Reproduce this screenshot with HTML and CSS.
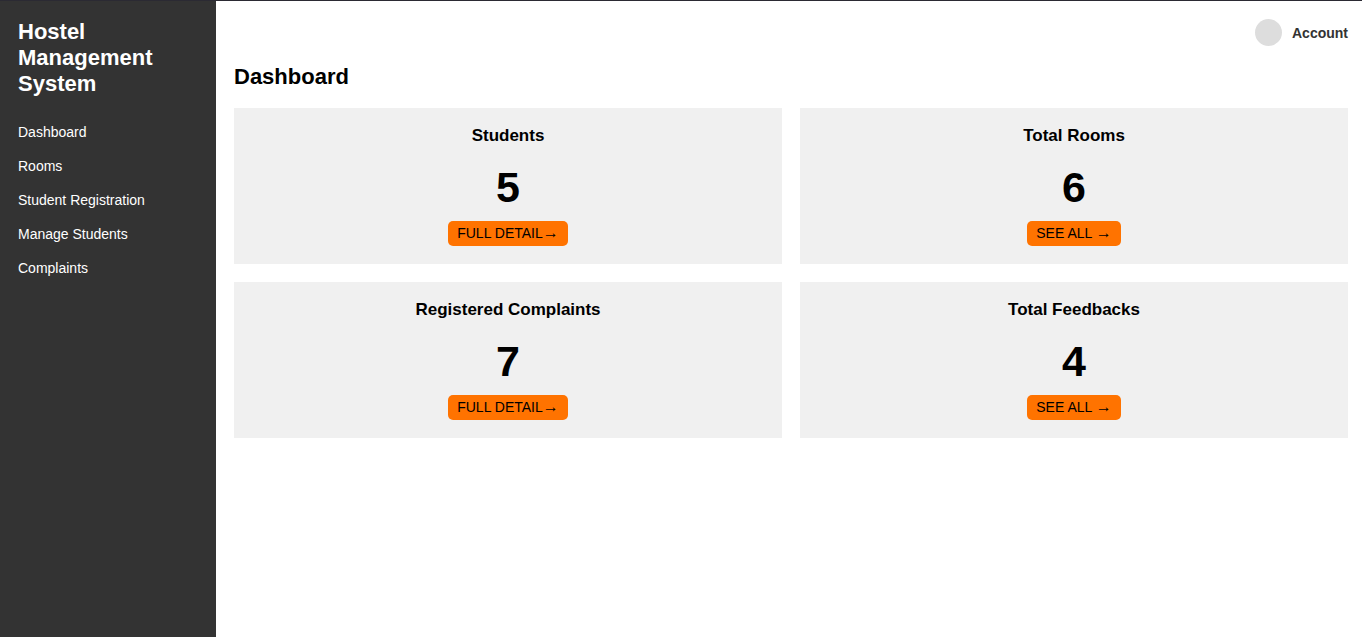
FILE: index.html
```html
<!DOCTYPE html>
<html lang="en">
<head>
<meta charset="utf-8">
<title>Hostel Management System</title>
<link rel="stylesheet" href="styles.css">
</head>
<body>
<div class="layout">
  <aside class="sidebar">
    <h2 class="brand">Hostel Management System</h2>
    <nav>
      <ul class="menu">
        <li><a href="#">Dashboard</a></li>
        <li><a href="#">Rooms</a></li>
        <li><a href="#">Student Registration</a></li>
        <li><a href="#">Manage Students</a></li>
        <li><a href="#">Complaints</a></li>
      </ul>
    </nav>
  </aside>
  <main class="content">
    <header class="topbar">
      <a class="account" href="#"><span class="avatar"></span>Account</a>
    </header>
    <h1 class="title">Dashboard</h1>
    <section class="cards">
      <article class="card">
        <h3>Students</h3>
        <p class="count">5</p>
        <button class="action" type="button">FULL DETAIL<span class="arrow">→</span></button>
      </article>
      <article class="card">
        <h3>Total Rooms</h3>
        <p class="count">6</p>
        <button class="action" type="button">SEE ALL <span class="arrow">→</span></button>
      </article>
      <article class="card">
        <h3>Registered Complaints</h3>
        <p class="count">7</p>
        <button class="action" type="button">FULL DETAIL<span class="arrow">→</span></button>
      </article>
      <article class="card">
        <h3>Total Feedbacks</h3>
        <p class="count">4</p>
        <button class="action" type="button">SEE ALL <span class="arrow">→</span></button>
      </article>
    </section>
  </main>
</div>
</body>
</html>
```
FILE: styles.css
```css
* {
  box-sizing: border-box;
}

body {
  margin: 0;
  font-family: "Liberation Sans", Arial, sans-serif;
  font-size: 14px;
  color: #000;
  background: #fff;
}

.layout {
  display: flex;
  min-height: 100vh;
  border-top: 1px solid #2b2a33;
}

.sidebar {
  flex: 0 0 216px;
  padding: 18px;
  background: #333;
  color: #fff;
}

.brand {
  margin: 0 0 27px;
  font-size: 22px;
  line-height: 26px;
}

.menu {
  display: grid;
  gap: 18px;
  margin: 0;
  padding: 0;
  list-style: none;
  line-height: 16px;
}

.menu a {
  color: #fff;
  text-decoration: none;
}

.content {
  flex: 1;
  padding: 18px 14px 18px 18px;
}

.topbar {
  display: flex;
  justify-content: flex-end;
}

.account {
  display: flex;
  align-items: center;
  gap: 10px;
  color: #333;
  font-weight: bold;
  text-decoration: none;
}

.avatar {
  width: 27px;
  height: 27px;
  border-radius: 50%;
  background: #ddd;
}

.title {
  margin: 18px 0;
  font-size: 22px;
  line-height: 26px;
}

.cards {
  display: grid;
  grid-template-columns: 1fr 1fr;
  gap: 18px;
}

.card {
  display: flex;
  flex-direction: column;
  align-items: center;
  padding: 18px;
  background: #f0f0f0;
}

.card h3 {
  margin: 0;
  font-size: 17px;
  line-height: 20px;
}

.count {
  margin: 16px 0 9px;
  font-size: 43px;
  font-weight: bold;
  line-height: 50px;
}

.action {
  padding: 4px 9px;
  border: 0;
  border-radius: 5px;
  background: #ff7300;
  color: #000;
  font: inherit;
  line-height: 17px;
}

.arrow {
  font-size: 16px;
  line-height: 1;
}
```
